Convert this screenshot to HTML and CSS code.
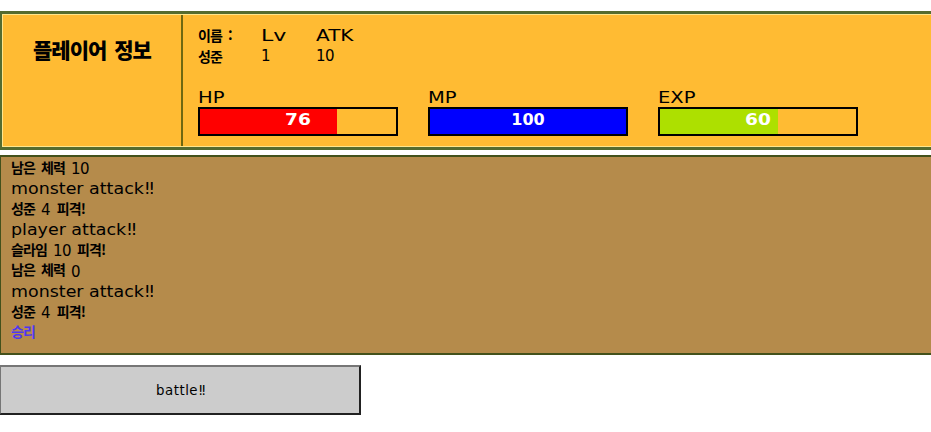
FILE: index.html
```
<!DOCTYPE html>
<html lang="ko">
<head>
<meta charset="utf-8">
<title>battle</title>
<link rel="stylesheet" href="styles.css">
</head>
<body>
<header class="player">
  <h1 class="title">플레이어 정보</h1>
  <section class="info">
    <div class="stats">
      <div class="stat name"><span class="ko">이름 :</span><span class="ko">성준</span></div>
      <div class="stat level"><span class="lv">Lv</span><span class="num">1</span></div>
      <div class="stat"><span class="atk">ATK</span><span class="num">10</span></div>
    </div>
    <div class="gauges">
      <div class="gauge"><span class="label">HP</span><div class="bar"><div class="fill hp"></div><b class="value">76</b></div></div>
      <div class="gauge"><span class="label">MP</span><div class="bar"><div class="fill mp"></div><b class="value full">100</b></div></div>
      <div class="gauge"><span class="label">EXP</span><div class="bar"><div class="fill exp"></div><b class="value">60</b></div></div>
    </div>
  </section>
</header>
<main class="log">
  <p><span class="ko">남은 체력 </span><span class="num">10</span></p>
  <p class="en">monster attack<span class="bang">!!</span></p>
  <p><span class="ko">성준 </span><span class="num four">4</span><span class="ko"> 피격!</span></p>
  <p class="en">player attack<span class="bang">!!</span></p>
  <p><span class="ko">슬라임 </span><span class="num">10</span><span class="ko"> 피격!</span></p>
  <p><span class="ko">남은 체력 </span><span class="num">0</span></p>
  <p class="en">monster attack<span class="bang">!!</span></p>
  <p><span class="ko">성준 </span><span class="num four">4</span><span class="ko"> 피격!</span></p>
  <p class="win"><span class="ko">승리</span></p>
</main>
<button class="battle">battle<span class="bang">!!</span></button>
</body>
</html>
```
FILE: styles.css
```
* { box-sizing: border-box; }
body {
  margin: 0;
  padding-top: 11px;
  overflow: hidden;
  background: #fff;
  color: #000;
  font: 16px/20.6px "DejaVu Sans", "Noto Sans CJK KR", sans-serif;
}
.player {
  display: flex;
  width: 940px;
  height: 139px;
  margin-left: -1px;
  border: 3px solid #556b2f;
  background: #fb3;
  box-shadow: inset 0 0 0 1px #ffe68c;
}
.title {
  width: 181px;
  margin: 1px 0;
  padding: 21px 0 0 31px;
  border-right: 2px solid #706810;
  font: 900 21px/26px "Noto Sans CJK KR", sans-serif;
  letter-spacing: -1px;
  word-spacing: 3px;
  white-space: nowrap;
}
.info { padding: 11px 0 0 15px; }
.stats { display: flex; height: 62px; }
.stat { display: flex; flex-direction: column; white-space: pre; }
.name { width: 63px; }
.level { width: 55px; }
.ko {
  position: relative;
  top: -1.5px;
  font: 700 14px/20.6px "Noto Sans CJK KR", sans-serif;
  letter-spacing: -.9px;
  word-spacing: 3px;
}
.name .ko { top: 0; }
.num { font-size: 15px; letter-spacing: -.5px; }
.four { letter-spacing: .3px; }
.lv, .atk, .label { transform-origin: 0 50%; }
.lv { padding-top: 1px; transform: scaleX(1.38); }
.atk { padding-top: 1px; transform: scaleX(1.25); }
.lv + .num, .atk + .num { margin-top: -1px; }
.gauges { display: flex; gap: 30px; }
.gauge { width: 200px; }
.label { display: block; height: 20px; padding-top: 1px; transform: scaleX(1.22); }
.bar {
  position: relative;
  height: 29px;
  border: 2px solid #000;
}
.fill { height: 100%; }
.hp { width: 70%; background: red; }
.mp { width: 100%; background: blue; }
.exp { width: 60%; background: #ade000; }
.value {
  position: absolute;
  top: 1px;
  left: 0;
  width: 100%;
  color: #fff;
  font-size: 16px;
  text-align: center;
  transform: scaleX(1.16);
}
.full { transform: none; }
.log {
  width: 940px;
  height: 200px;
  margin: 5px 0 10px -1px;
  padding: 1px 10px;
  border: 2px solid #43511b;
  background: #b58b4b;
}
.log p { height: 20.6px; margin: 0; white-space: pre; }
.log .en {
  width: max-content;
  transform: scaleX(1.09);
  transform-origin: 0 50%;
}
.bang { letter-spacing: -2.4px; }
.win { color: #4f38f0; }
.battle {
  display: block;
  width: 362px;
  height: 50px;
  margin-left: -1px;
  border: 2px solid;
  border-color: #767676 #212121 #212121 #767676;
  background: #ccc;
  color: #000;
  font: 13.33px "DejaVu Sans", sans-serif;
  letter-spacing: .5px;
}
```
